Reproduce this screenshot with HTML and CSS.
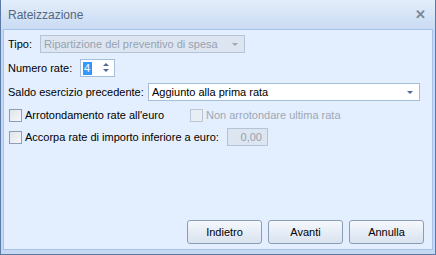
FILE: index.html
```html
<!DOCTYPE html>
<html lang="it">
<head>
    <meta charset="UTF-8">
    <title>Rateizzazione</title>
    <link rel="stylesheet" href="styles.css">
</head>
<body>
    <div class="window">
        <div class="titlebar">
            <span class="title">Rateizzazione</span>
            <span class="close">&#10005;</span>
        </div>
        <div class="frame">
            <div class="content">
                <div class="row">
                    <label class="lbl-tipo">Tipo:</label>
                    <div class="combo combo-tipo disabled">
                        <span>Ripartizione del preventivo di spesa</span>
                        <span class="arrow"></span>
                    </div>
                </div>
                <div class="row">
                    <label class="lbl-rate">Numero rate:</label>
                    <div class="spin">
                        <span class="sel">4</span><span class="caret"></span>
                        <span class="spin-btns">
                            <span class="up"></span>
                            <span class="down"></span>
                        </span>
                    </div>
                </div>
                <div class="row">
                    <label class="lbl-saldo">Saldo esercizio precedente:</label>
                    <div class="combo combo-saldo">
                        <span>Aggiunto alla prima rata</span>
                        <span class="arrow"></span>
                    </div>
                </div>
                <div class="row row-check">
                    <label class="check check-arr"><span class="box"></span>Arrotondamento rate all'euro</label>
                    <label class="check disabled"><span class="box"></span>Non arrotondare ultima rata</label>
                </div>
                <div class="row row-check">
                    <label class="check check-acc"><span class="box"></span>Accorpa rate di importo inferiore a euro:</label>
                    <div class="amount">0,00</div>
                </div>
                <div class="buttons">
                    <button class="btn">Indietro</button>
                    <button class="btn">Avanti</button>
                    <button class="btn">Annulla</button>
                </div>
            </div>
        </div>
    </div>
</body>
</html>
```

FILE: styles.css
```css
body {
    margin: 0;
    font-family: "Liberation Sans", Arial, sans-serif;
    font-size: 11px;
    color: #000;
}
.window {
    width: 436px;
    height: 255px;
    box-sizing: border-box;
    border: 1px solid #5b7aa8;
    border-top: none;
    background: #c5d9f3;
    display: flex;
    flex-direction: column;
}
.titlebar {
    height: 29px;
    display: flex;
    align-items: center;
    justify-content: space-between;
    padding: 0 9px 0 7px;
    background: linear-gradient(#e3eefb, #d8e6f8 40%, #c9dbf3);
}
.title {
    color: #56677f;
    font-size: 12px;
}
.close {
    color: #7c8796;
    font-size: 13px;
    font-weight: bold;
}
.frame {
    flex: 1;
    padding: 0 2px 4px 2px;
    display: flex;
}
.content {
    flex: 1;
    background: #e3efff;
    border: 1px solid #a8c4ea;
    padding: 5px 8px 0 4px;
    display: flex;
    flex-direction: column;
}
.row {
    display: flex;
    align-items: center;
    height: 18px;
    margin-bottom: 6px;
}
.row label,
.row div {
    white-space: nowrap;
    flex-shrink: 0;
}
.lbl-tipo { width: 32px; }
.lbl-rate { width: 72px; }
.lbl-saldo { width: 140px; }
.combo {
    height: 18px;
    box-sizing: border-box;
    border: 1px solid #a6bedd;
    background: #fff;
    display: flex;
    align-items: center;
    justify-content: space-between;
    padding: 0 6px 0 3px;
}
.combo.disabled {
    background: #dde6f0;
    border-color: #b3c4d8;
    color: #95a2b3;
}
.combo-tipo { width: 205px; }
.combo-saldo { width: 272px; }
.arrow {
    width: 0;
    height: 0;
    border-left: 3px solid transparent;
    border-right: 3px solid transparent;
    border-top: 3px solid #4d6b96;
}
.disabled .arrow {
    border-top-color: #9aa8b8;
}
.spin {
    width: 35px;
    height: 18px;
    box-sizing: border-box;
    border: 1px solid #a6bedd;
    background: #fff;
    display: flex;
    align-items: center;
    padding-left: 2px;
    position: relative;
}
.sel {
    background: #3399ff;
    color: #fff;
    line-height: 13px;
    padding: 0 1px;
}
.caret {
    width: 1px;
    height: 13px;
    background: #d86a00;
}
.spin-btns {
    position: absolute;
    right: 5px;
    top: 3px;
    display: flex;
    flex-direction: column;
    gap: 3px;
}
.up, .down {
    width: 0;
    height: 0;
    border-left: 3px solid transparent;
    border-right: 3px solid transparent;
}
.up { border-bottom: 3px solid #4d6b96; }
.down { border-top: 3px solid #4d6b96; }
.row-check {
    height: 16px;
}
.check {
    display: flex;
    align-items: center;
}
.check .box {
    flex-shrink: 0;
    width: 11px;
    height: 11px;
    border: 1px solid #8e9eb3;
    background: linear-gradient(135deg, #dfe3e8, #f7f8fa);
    margin: 0 3px 0 1px;
}
.check-arr { width: 181px; }
.check-acc { width: 219px; }
.check.disabled {
    color: #a0a8b2;
}
.check.disabled .box {
    border-color: #bcc6d2;
    background: #e9eef4;
}
.amount {
    width: 41px;
    height: 18px;
    box-sizing: border-box;
    border: 1px solid #b3c4d8;
    background: #dde6f0;
    color: #95a2b3;
    text-align: right;
    line-height: 16px;
    padding-right: 5px;
}
.buttons {
    margin-top: auto;
    margin-bottom: 5px;
    display: flex;
    justify-content: flex-end;
    gap: 6px;
}
.btn {
    width: 75px;
    height: 24px;
    font-family: inherit;
    font-size: 11px;
    color: #000;
    border: 1px solid #8c9db3;
    border-radius: 3px;
    background: linear-gradient(#f6f9fd, #e6edf6 50%, #d9e3ef);
}
```
